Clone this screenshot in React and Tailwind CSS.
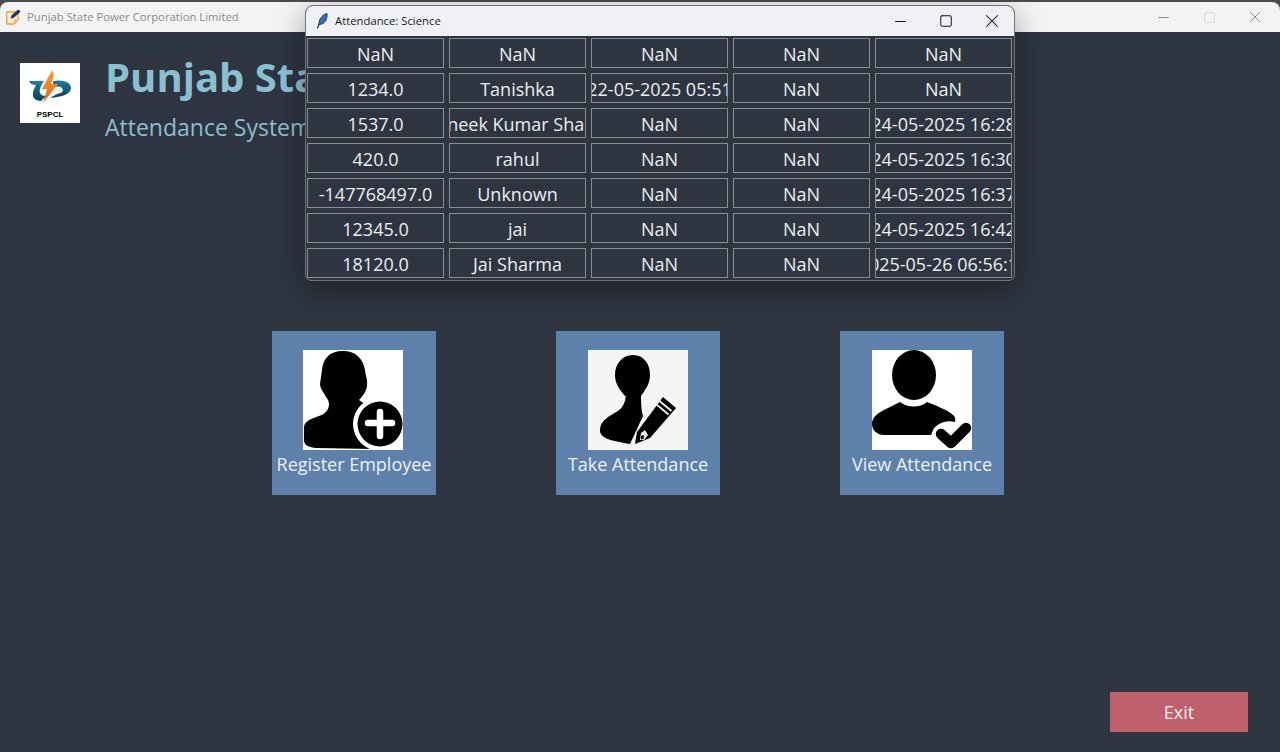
import { Minus, Square, X } from "lucide-react";

const rows = [
    ["NaN", "NaN", "NaN", "NaN", "NaN"],
    ["1234.0", "Tanishka", "22-05-2025 05:51", "NaN", "NaN"],
    ["1537.0", "Avaneek Kumar Sharma", "NaN", "NaN", "24-05-2025 16:28"],
    ["420.0", "rahul", "NaN", "NaN", "24-05-2025 16:30"],
    ["-147768497.0", "Unknown", "NaN", "NaN", "24-05-2025 16:37"],
    ["12345.0", "jai", "NaN", "NaN", "24-05-2025 16:42"],
    ["18120.0", "Jai Sharma", "NaN", "NaN", "2025-05-26 06:56:12"],
];

function AppIcon() {
    return (
        <svg width="16" height="16" viewBox="0 0 16 16" className="shrink-0">
            <path d="M1.500 3h10.500v7.500L8 15H1.500A.8.8 0 0 1 .7 14.200V3.800A.8.8 0 0 1 1.500 3z" fill="#fdf0da" stroke="#f39a2c" strokeWidth="1.300" />
            <path d="M8 15v-4.500h4z" fill="#f7b562" />
            <path d="M4.500 9.500l1-3L11.500 1c1-.8 3.200.8 2.500 2.200L7.500 9z" fill="#27306e" />
        </svg>
    );
}

function Feather() {
    return (
        <svg width="12" height="16" viewBox="0 0 12 16" className="shrink-0">
            <path d="M1.500 15.500L3 10C3.500 5 7 1.500 11 .5c.5 4-1 9-5 10.500L3 11.500z" fill="#2f6fb8" stroke="#10243f" strokeWidth="0.8" />
        </svg>
    );
}

function Logo() {
    return (
        <div className="w-[60px] h-[60px] bg-white flex flex-col items-center shrink-0">
            <svg width="60" height="47" viewBox="0 0 60 47" className="shrink-0">
                <defs>
                    <linearGradient id="bolt" x1="0" y1="0" x2="0" y2="1">
                        <stop offset="0" stopColor="#f7a12e" />
                        <stop offset="1" stopColor="#e8611c" />
                    </linearGradient>
                    <linearGradient id="swoosh" x1="0" y1="0" x2="0" y2="1">
                        <stop offset="0" stopColor="#1c7fa6" />
                        <stop offset="1" stopColor="#0e3f55" />
                    </linearGradient>
                </defs>
                <path d="M9 18H24C21 22 19 27 20 30C21 32 23 33 26 33L21 38C15 38 12 34 13 30C13 27 15 24 16 22C13 22 10 21 9 18z" fill="url(#swoosh)" />
                <path d="M33 18C43 16 51 19 51 25C51 31 42 34 30 35L37 31C41 30 43 29 43 27C42 23 38 23 33 24z" fill="url(#swoosh)" />
                <path d="M32 7L22 26H27L23 40L38 21H31L34 12z" fill="url(#bolt)" />
            </svg>
            <span className="text-[8px] leading-[10px] font-bold text-black font-['Liberation_Sans',sans-serif]">PSPCL</span>
        </div>
    );
}

function AddUserIcon() {
    return (
        <svg width="100" height="100" viewBox="0 0 100 100" className="mr-[2px]">
            <rect width="100" height="100" fill="#fff" />
            <path d="M40 1C26 1 20 9 19 20L17 34C17 37 19 40 20 42C23 47 26 50 26 54C26 60 22 64 16 66C8 69 1 71 1 78L1 90C1 95 5 97 12 98L70 99L70 60L56 50C60 46 64 40 64 35C65 30 62 24 62 20C60 8 52 1 40 1z" fill="#000" />
            <circle cx="77" cy="74" r="27" fill="#fff" />
            <circle cx="77" cy="74" r="22.500" fill="#000" />
            <path d="M77 62v24M65 73h24" stroke="#fff" strokeWidth="6.500" strokeLinecap="round" />
            <rect x="0" y="99" width="100" height="1" fill="#fff" />
        </svg>
    );
}

function PenUserIcon() {
    return (
        <svg width="100" height="100" viewBox="0 0 100 100">
            <rect width="100" height="100" fill="#f5f5f5" />
            <path d="M45 5C56 5 62 14 62 25C62 34 57 40 53 46L37 46C32 40 27 34 27 25C27 14 34 5 45 5z" fill="#000" />
            <path d="M38 42C38 50 36 57 30 61C22 66 12 70 12 80C12 87 18 90 42 94L55 66C53 60 53 50 53 42z" fill="#000" />
            <path d="M75 47L88 58L62 88L47 94L49 82z" fill="#000" />
            <path d="M71.500 51L83.500 61M68.500 54.500L80.500 64.500" stroke="#f5f5f5" strokeWidth="1.800" />
            <path d="M53 83L57 80L60 85L56 90L52 90z" fill="#f5f5f5" />
            <path d="M53 86L56 85L55.500 89L53 89.500z" fill="#000" />
        </svg>
    );
}

function CheckUserIcon() {
    return (
        <svg width="100" height="100" viewBox="0 0 100 100">
            <rect width="100" height="100" fill="#fff" />
            <ellipse cx="42" cy="25" rx="22" ry="25" fill="#000" />
            <path d="M28 52C36 58 48 58 55 52C63 55 75 60 80 64C83 66 84 69 83 72C75 70 68 72 62 78L59 85H12C4 85 0 79 0 74C0 67 6 63 12 60z" fill="#000" />
            <path d="M69 84L79 93L94 78" fill="none" stroke="#000" strokeWidth="10.500" strokeLinecap="round" strokeLinejoin="round" />
        </svg>
    );
}

function ActionButton({ label, children }) {
    return (
        <button className="w-[164px] h-[164px] bg-[#5e81ac] flex flex-col items-center pt-[19px] text-[#eceff4] text-lg leading-[28px]">
            {children}
            <span className="whitespace-nowrap">{label}</span>
        </button>
    );
}

const App = () => {
    return (
        <div className="w-[1280px] h-[752px] relative overflow-hidden flex flex-col bg-[#2e3440] font-['Open_Sans','Noto_Sans',sans-serif]">
            {/* main window title bar */}
            <div className="h-[32px] shrink-0 bg-[#4a4a4c] pt-[2px]">
                <div className="h-[30px] bg-[#f3f3f3] rounded-t-lg flex items-center pl-[6px] gap-[5px]">
                    <AppIcon />
                    <span className="text-[11.3px] text-[#8b8b8b]">Punjab State Power Corporation Limited</span>
                    <div className="ml-auto flex items-center text-[#8f8f8f]">
                        <div className="w-[46px] flex justify-center ml-[1px]">
                            <Minus size={17} strokeWidth={1.4} />
                        </div>
                        <div className="w-[46px] flex justify-center text-[#d8d8d8]">
                            <Square size={13} strokeWidth={1.6} />
                        </div>
                        <div className="w-[46px] flex justify-center mr-[2px]">
                            <X size={20} strokeWidth={1.2} />
                        </div>
                    </div>
                </div>
            </div>

            {/* header */}
            <div className="flex pl-[20px] pt-[31px] gap-[25px] h-[299px] shrink-0">
                <Logo />
                <div className="flex flex-col text-[#88c0d0]">
                    <h1 className="text-[40px] leading-[50px] font-bold mt-[-11px] whitespace-nowrap">Punjab State Power Corporation Limited</h1>
                    <p className="text-[23px] leading-[32px] mt-[9px] whitespace-nowrap">Attendance System</p>
                </div>
            </div>

            <div className="flex gap-[120px] pl-[272px]">
                <ActionButton label="Register Employee">
                    <AddUserIcon />
                </ActionButton>
                <ActionButton label="Take Attendance">
                    <PenUserIcon />
                </ActionButton>
                <ActionButton label="View Attendance">
                    <CheckUserIcon />
                </ActionButton>
            </div>

            <div className="flex justify-end pr-[32px] mt-[197px]">
                <button className="w-[138px] h-[40px] bg-[#bf616a] text-[#eceff4] text-lg">Exit</button>
            </div>

            {/* attendance popup */}
            <div className="absolute left-[305px] top-[5px] w-[710px] h-[276px] rounded-t-lg rounded-b-md border border-[#6f737a] bg-[#2e3440] shadow-[0_8px_28px_rgba(0,0,0,0.35)] overflow-hidden">
                <div className="h-[30px] bg-[#f0f1f4] flex items-center pl-[10px] gap-[7px]">
                    <Feather />
                    <span className="text-[11.3px] text-[#1a1a1a]">Attendance: Science</span>
                    <div className="ml-auto flex items-center text-[#111] mr-[-1px]">
                        <div className="w-[46px] flex justify-center">
                            <Minus size={17} strokeWidth={1.4} />
                        </div>
                        <div className="w-[46px] flex justify-center">
                            <Square size={14} strokeWidth={1.7} />
                        </div>
                        <div className="w-[46px] flex justify-center">
                            <X size={22} strokeWidth={1.1} />
                        </div>
                    </div>
                </div>
                <div className="flex flex-col gap-[5px] pl-[1px] pt-[2px]">
                    {rows.map((row, idx) => (
                        <div key={idx} className="flex gap-[5px]">
                            {row.map((cell, i) => (
                                <div
                                    key={i}
                                    className="w-[137px] h-[30px] pt-[2px] border border-[#8a8d93] flex items-center justify-center overflow-hidden text-[#eceff4] text-lg"
                                >
                                    <span className="shrink-0 whitespace-nowrap">{cell}</span>
                                </div>
                            ))}
                        </div>
                    ))}
                </div>
            </div>
        </div>
    );
};

export default App;
